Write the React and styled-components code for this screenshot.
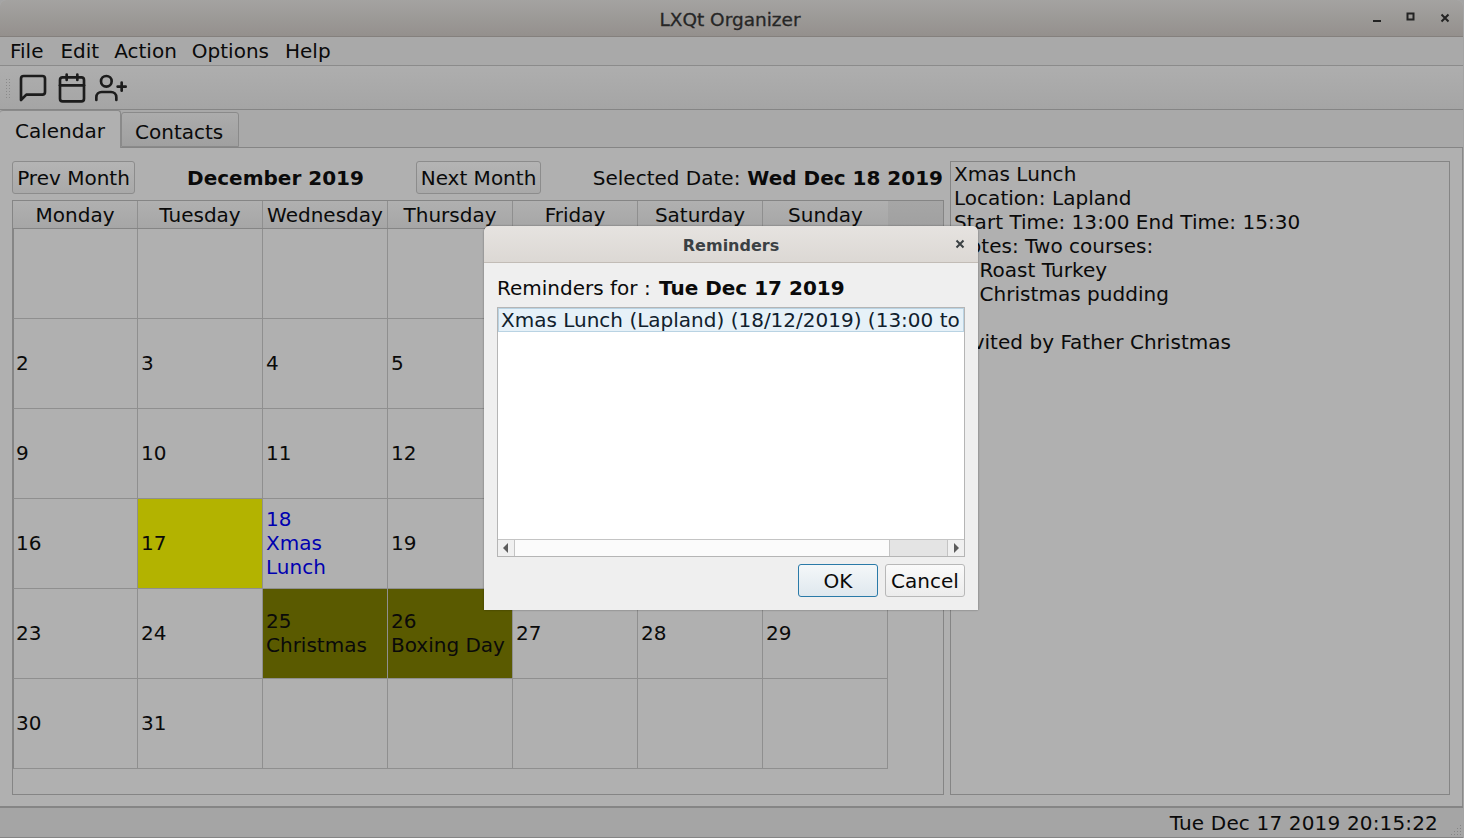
import React from 'react';
import styled, { createGlobalStyle } from 'styled-components';
import { FiMessageSquare, FiCalendar, FiUserPlus } from 'react-icons/fi';

const Global = createGlobalStyle`
  html, body { margin: 0; padding: 0; height: 100%; background: #a4a4a4; overflow: hidden; }
  body { font-family: "DejaVu Sans", sans-serif; font-size: 20px; color: #0a0a0a; }
  #root { height: 100%; }
`;

const Screen = styled.div`
  position: relative;
  width: 1464px;
  height: 838px;
`;

const Window = styled.div`
  width: 1463px;
  height: 838px;
  display: flex;
  flex-direction: column;
  background: #b0b0b0;
  border-radius: 6px 6px 0 0;
  overflow: hidden;
`;

const TitleBar = styled.div`
  height: 36px;
  flex: none;
  display: flex;
  align-items: center;
  justify-content: center;
  position: relative;
  background: linear-gradient(#a4a3a1, #94908d);
  border-bottom: 1px solid #84807d;
  color: #262626;
`;

const TitleText = styled.span`
  font-size: 18.5px;
  padding-top: 3px;
  margin-left: -3px;
  -webkit-text-stroke: 0.3px #262626;
`;

const WinButtons = styled.div`
  position: absolute;
  right: 13px;
  top: 0;
  height: 36px;
  display: flex;
  align-items: center;
  gap: 22px;
  & > svg:last-child { margin-left: 1px; }
`;

const Menu = styled.div`
  height: 28px;
  flex: none;
  display: flex;
  align-items: center;
  padding-left: 10px;
  gap: 15px;
  background: #a9a9a9;
  border-bottom: 1px solid #8b8b8b;
  & > span:first-child { margin-right: 2px; }
  & > span:last-child { margin-left: 1px; }
`;

const Toolbar = styled.div`
  height: 43px;
  flex: none;
  display: flex;
  align-items: center;
  background: linear-gradient(#aeaeae, #a5a5a5);
  border-bottom: 1px solid #858585;
`;

const Grip = styled.div`
  width: 6px;
  height: 20px;
  margin: 0 6px 0 5px;
  background-image: radial-gradient(#8a8a8a 0.6px, transparent 0.8px);
  background-size: 3px 3px;
`;

const ToolIcons = styled.div`
  display: flex;
  align-items: center;
  gap: 7px;
  color: #1c1c1c;
`;

const TabBar = styled.div`
  height: 38px;
  flex: none;
  display: flex;
  align-items: flex-end;
  background: #a9a9a9;
  border-bottom: 1px solid #858585;
  box-sizing: border-box;
`;

const Tab = styled.div`
  box-sizing: border-box;
  height: ${p => (p.$active ? 38 : 35)}px;
  margin-bottom: ${p => (p.$active ? -1 : 0)}px;
  width: ${p => (p.$active ? 121 : 118)}px;
  padding: ${p => (p.$active ? '8px 0 0 15px' : '7px 0 0 13px')};
  border: 1px solid #8a8a8a;
  border-bottom: ${p => (p.$active ? 'none' : '1px solid #8a8a8a')};
  border-left: ${p => (p.$active ? 'none' : '1px solid #8a8a8a')};
  border-radius: 3px 3px 0 0;
  background: ${p => (p.$active ? '#b0b0b0' : 'linear-gradient(#acacac, #a0a0a0)')};
`;

const TabPane = styled.div`
  flex: 1;
  display: flex;
  gap: 6px;
  padding: 13px 12px 11px 12px;
  min-height: 0;
  border-right: 1px solid #8a8a8a;
`;

const CalendarSide = styled.div`
  width: 932px;
  display: flex;
  flex-direction: column;
  gap: 6px;
`;

const NavRow = styled.div`
  height: 33px;
  flex: none;
  display: flex;
  align-items: center;
`;

const NavButton = styled.div`
  box-sizing: border-box;
  width: ${p => p.$w}px;
  height: 33px;
  display: flex;
  align-items: center;
  justify-content: center;
  border: 1px solid #8c8c8c;
  border-radius: 3px;
  background: linear-gradient(#b4b4b4, #a9a9a9);
`;

const MonthTitle = styled.div`
  width: 281px;
  text-align: center;
  font-weight: bold;
`;

const SelectedDate = styled.div`
  flex: 1;
  text-align: right;
  white-space: nowrap;
  padding-right: 1px;
  & b { margin-left: 0.6px; }
`;

const TableFrame = styled.div`
  flex: 1;
  border: 1px solid #858585;
  min-height: 0;
`;

const HeaderRow = styled.div`
  display: grid;
  grid-template-columns: repeat(7, 125px);
  height: 27px;
  background: linear-gradient(#a6a6a6, #a0a0a0);
  border-bottom: 1px solid #858585;
`;

const HeaderCell = styled.div`
  height: 27px;
  overflow: hidden;
  text-align: center;
  line-height: 29px;
  background: linear-gradient(#b0b0b0, #a6a6a6);
  border-right: 1px solid #8f8f8f;
  &:last-child { border-right: none; }
`;

const DayGrid = styled.div`
  display: grid;
  grid-template-columns: repeat(7, 125px);
  grid-auto-rows: 90px;
`;

const Day = styled.div`
  box-sizing: border-box;
  padding: 0 3px 2px 3px;
  display: flex;
  flex-direction: column;
  justify-content: center;
  line-height: 24px;
  border-right: 1px solid #8f8f8f;
  border-bottom: 1px solid #8f8f8f;
  background: ${p => p.$bg || 'transparent'};
  color: ${p => p.$color || 'inherit'};
  white-space: pre-line;
  &:nth-child(7n + 1) {
    border-left: 1px solid #858585;
    padding-left: 2px;
  }
`;

const DetailPanel = styled.div`
  flex: 1;
  box-sizing: border-box;
  border: 1px solid #858585;
  padding: 0 3px;
  line-height: 24px;
  letter-spacing: 0.03px;
  white-space: pre-wrap;
`;

const StatusBar = styled.div`
  height: 32px;
  flex: none;
  position: relative;
  box-sizing: border-box;
  display: flex;
  align-items: center;
  justify-content: flex-end;
  padding-right: 25px;
  letter-spacing: 0.16px;
  background: #a5a5a5;
  border-top: 2px solid #858585;
  border-bottom: 1px solid #858585;
`;

const SizeGrip = styled.svg`
  position: absolute;
  right: 1px;
  bottom: 1px;
`;

const Dialog = styled.div`
  position: absolute;
  left: 484px;
  top: 226px;
  width: 494px;
  height: 384px;
  display: flex;
  flex-direction: column;
  background: #efefef;
  border-radius: 6px 6px 0 0;
  box-shadow: 0 0 2px rgba(0, 0, 0, 0.45);
`;

const DialogTitle = styled.div`
  height: 37px;
  flex: none;
  position: relative;
  display: flex;
  align-items: center;
  justify-content: center;
  padding-top: 2px;
  box-sizing: border-box;
  background: linear-gradient(#e6e3e0, #dcd8d4);
  border-bottom: 1px solid #c2bcb6;
  border-radius: 6px 6px 0 0;
  font-size: 16px;
  font-weight: bold;
  color: #3b4144;
`;

const DialogClose = styled.div`
  position: absolute;
  right: 13px;
  top: 13px;
  display: flex;
`;

const DialogBody = styled.div`
  flex: 1;
  display: flex;
  flex-direction: column;
  padding: 13px 13px 13px 13px;
`;

const ReminderLabel = styled.div`
  height: 24px;
  line-height: 24px;
  margin-bottom: 7px;
  & b { margin-left: 2px; }
`;

const ListBox = styled.div`
  height: 250px;
  box-sizing: border-box;
  display: flex;
  flex-direction: column;
  background: #fff;
  border: 1px solid #b5b5b5;
`;

const ListItems = styled.div`
  flex: 1;
  overflow: hidden;
`;

const ListItem = styled.div`
  height: 24px;
  box-sizing: border-box;
  line-height: 22px;
  padding-left: 2px;
  white-space: nowrap;
  overflow: hidden;
  background: #e6f1f8;
  border: 1px solid #b9d3e3;
  color: #10202c;
`;

const HScroll = styled.div`
  height: 16px;
  flex: none;
  display: flex;
  border-top: 1px solid #c4c4c4;
  background: #e4e4e4;
`;

const ScrollArrow = styled.div`
  width: 16px;
  flex: none;
  display: flex;
  align-items: center;
  justify-content: center;
  background: #f0f0f0;
`;

const ScrollThumb = styled.div`
  width: 376px;
  flex: none;
  box-sizing: border-box;
  background: #fbfbfb;
  border-left: 1px solid #c4c4c4;
  border-right: 1px solid #c4c4c4;
`;

const ScrollRest = styled.div`
  flex: 1;
  border-right: 1px solid #c4c4c4;
`;

const ButtonRow = styled.div`
  display: flex;
  justify-content: flex-end;
  gap: 7px;
  margin-top: 7px;
`;

const DialogButton = styled.div`
  box-sizing: border-box;
  height: 33px;
  width: 80px;
  display: flex;
  align-items: center;
  justify-content: center;
  border-radius: 3px;
  border: 1px solid ${p => (p.$primary ? '#2a7aa8' : '#b8b8b8')};
  background: ${p => (p.$primary ? 'linear-gradient(#f4f7f9, #dfe8ee)' : 'linear-gradient(#fafafa, #ececec)')};
`;

const days = [
  [{}, {}, {}, {}, {}, {}, {}],
  [{ t: '2' }, { t: '3' }, { t: '4' }, { t: '5' }, {}, {}, {}],
  [{ t: '9' }, { t: '10' }, { t: '11' }, { t: '12' }, {}, {}, {}],
  [
    { t: '16' },
    { t: '17', bg: '#b3b300' },
    { t: '18\nXmas\nLunch', color: '#0000b0' },
    { t: '19' },
    {}, {}, {},
  ],
  [
    { t: '23' },
    { t: '24' },
    { t: '25\nChristmas', bg: '#5a5a00' },
    { t: '26\nBoxing Day', bg: '#5a5a00' },
    { t: '27' },
    { t: '28' },
    { t: '29' },
  ],
  [{ t: '30' }, { t: '31' }, {}, {}, {}, {}, {}],
];

const weekDays = ['Monday', 'Tuesday', 'Wednesday', 'Thursday', 'Friday', 'Saturday', 'Sunday'];

const details = `Xmas Lunch
Location: Lapland
Start Time: 13:00 End Time: 15:30
Notes: Two courses:
1. Roast Turkey
2. Christmas pudding

Invited by Father Christmas`;

// size grip dots, bottom right triangle
const gripDots = [[9, 1], [6, 4], [9, 4], [3, 7], [6, 7], [9, 7], [0, 10], [3, 10], [6, 10], [9, 10]];

const Cross = ({ color, size }) => (
  <svg width={size} height={size} viewBox="0 0 10 10">
    <path d="M1.5 1.5 L8.5 8.5 M8.5 1.5 L1.5 8.5" stroke={color} strokeWidth="2" fill="none" />
  </svg>
);

const App = () => {
  return (
    <Screen>
      <Global />
      <Window>
        <TitleBar>
          <TitleText>LXQt Organizer</TitleText>
          <WinButtons>
            <svg width="12" height="12" viewBox="0 0 12 12">
              <rect x="2" y="8" width="8" height="2" fill="#232323" />
            </svg>
            <svg width="12" height="12" viewBox="0 0 12 12">
              <rect x="2.5" y="1.5" width="6" height="6" stroke="#232323" strokeWidth="2" fill="none" />
            </svg>
            <Cross color="#232323" size={10} />
          </WinButtons>
        </TitleBar>
        <Menu>
          <span>File</span>
          <span>Edit</span>
          <span>Action</span>
          <span>Options</span>
          <span>Help</span>
        </Menu>
        <Toolbar>
          <Grip />
          <ToolIcons>
            <FiMessageSquare size={32} />
            <FiCalendar size={32} />
            <FiUserPlus size={32} />
          </ToolIcons>
        </Toolbar>
        <TabBar>
          <Tab $active>Calendar</Tab>
          <Tab>Contacts</Tab>
        </TabBar>
        <TabPane>
          <CalendarSide>
            <NavRow>
              <NavButton $w={123}>Prev Month</NavButton>
              <MonthTitle>December 2019</MonthTitle>
              <NavButton $w={125}>Next Month</NavButton>
              <SelectedDate>Selected Date: <b>Wed Dec 18 2019</b></SelectedDate>
            </NavRow>
            <TableFrame>
              <HeaderRow>
                {weekDays.map(d => <HeaderCell key={d}>{d}</HeaderCell>)}
              </HeaderRow>
              <DayGrid>
                {days.flat().map((d, i) => (
                  <Day key={i} $bg={d.bg} $color={d.color}>{d.t}</Day>
                ))}
              </DayGrid>
            </TableFrame>
          </CalendarSide>
          <DetailPanel>{details}</DetailPanel>
        </TabPane>
        <StatusBar>
          Tue Dec 17 2019 20:15:22
          <SizeGrip width="11" height="12" viewBox="0 0 11 12">
            {gripDots.map(([x, y]) => <rect key={`${x}-${y}`} x={x} y={y} width="1" height="1" fill="#858585" />)}
          </SizeGrip>
        </StatusBar>
      </Window>
      <Dialog>
        <DialogTitle>
          Reminders
          <DialogClose><Cross color="#3b4144" size={10} /></DialogClose>
        </DialogTitle>
        <DialogBody>
          <ReminderLabel>Reminders for : <b>Tue Dec 17 2019</b></ReminderLabel>
          <ListBox>
            <ListItems>
              <ListItem>Xmas Lunch (Lapland) (18/12/2019) (13:00 to</ListItem>
            </ListItems>
            <HScroll>
              <ScrollArrow>
                <svg width="8" height="10" viewBox="0 0 8 10"><path d="M6 0 L1 5 L6 10 Z" fill="#5c5c5c" /></svg>
              </ScrollArrow>
              <ScrollThumb />
              <ScrollRest />
              <ScrollArrow>
                <svg width="8" height="10" viewBox="0 0 8 10"><path d="M2 0 L7 5 L2 10 Z" fill="#5c5c5c" /></svg>
              </ScrollArrow>
            </HScroll>
          </ListBox>
          <ButtonRow>
            <DialogButton $primary>OK</DialogButton>
            <DialogButton>Cancel</DialogButton>
          </ButtonRow>
        </DialogBody>
      </Dialog>
    </Screen>
  );
};

export default App;
